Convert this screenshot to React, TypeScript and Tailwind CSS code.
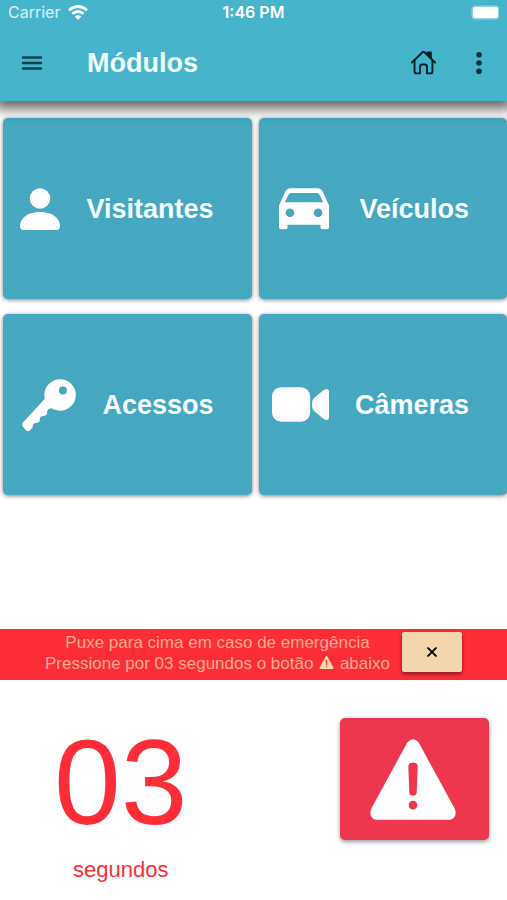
import { JSX, useState } from "react";

interface Module {
  label: string;
  href: string;
  icon: JSX.Element;
}

const modules: Module[] = [
  {
    label: "Visitantes",
    href: "#visitantes",
    icon: (
      <svg width="40" height="42" viewBox="0 0 40 42" fill="currentColor">
        <circle cx="20" cy="10.5" r="10.3" />
        <path d="M0 38C0 30 8 24 20 24S40 30 40 38q0 4-3 4H3q-3 0-3-4z" />
      </svg>
    ),
  },
  {
    label: "Veículos",
    href: "#veiculos",
    icon: (
      <svg width="54" height="42" viewBox="0 0 163 125" fill="currentColor">
        <path
          fillRule="evenodd"
          d="M0 52L18 12Q23 0 36 0H115Q128 0 133 12L151 52V116q0 8-8 8h-10q-8 0-8-8V110H26v6q0 8-8 8H8q-8 0-8-8zM36 14Q31 14 29 19L18 42H133L122 19Q120 14 115 14zM33 61a13 13 0 1 0 0 26a13 13 0 1 0 0-26zM118 61a13 13 0 1 0 0 26a13 13 0 1 0 0-26z"
        />
      </svg>
    ),
  },
  {
    label: "Acessos",
    href: "#acessos",
    icon: (
      <svg width="54" height="54" viewBox="0 0 161 161" fill="currentColor">
        <path
          fillRule="evenodd"
          d="M68 62A47 47 0 1 1 88 90Q74 92 75 103Q76 112 64 113Q53 113 53 123Q54 133 42 134Q30 135 32 147L24 156Q18 161 12 156L4 147Q-2 140 3 133zM122 25a12 12 0 1 0 0 24a12 12 0 1 0 0-24z"
        />
      </svg>
    ),
  },
  {
    label: "Câmeras",
    href: "#cameras",
    icon: (
      <svg width="57" height="35" viewBox="0 0 172 104" fill="currentColor">
        <rect width="115" height="104" rx="27" />
        <path d="M121 46Q121 38 128 32L154 10Q160 5 166 5Q172 6 172 13V91Q172 98 166 99Q160 99 154 94L128 72Q121 66 121 58z" />
      </svg>
    ),
  },
];

const WarningIcon = ({ className }: { className: string }) => (
  <svg className={className} viewBox="0 0 258 242" fill="currentColor">
    <path
      fillRule="evenodd"
      d="M112 10Q129-9 146 10L254 208Q264 231 242 242H17Q-6 234 4 208zM129 70Q114 70 115 84L118 160Q119 170 129 170Q139 170 140 160L143 84Q144 70 129 70zM129 185a13 13 0 1 0 0 26a13 13 0 1 0 0-26z"
    />
  </svg>
);

const StatusBar = () => (
  <div className="grid h-6 grid-cols-3 items-center px-2 font-[Inter,sans-serif] text-base leading-6 text-white">
    <div className="flex items-center gap-2 text-white/80">
      <span>Carrier</span>
      <svg width="20" height="15" viewBox="0 0 60 44" fill="none" stroke="#fff" strokeWidth="8">
        <path d="M3 15Q30-7 57 15M13 26Q30 12 47 26" />
        <path d="M20 34Q30 26 40 34L30 44z" fill="#fff" stroke="none" />
      </svg>
    </div>
    <span className="text-center font-semibold">1:46 PM</span>
    <svg className="justify-self-end" width="28" height="15" viewBox="0 0 32 15" preserveAspectRatio="xMinYMid slice">
      <rect x="0.5" y="0.5" width="28" height="14" rx="4" fill="#fff" fillOpacity="0.4" />
      <rect x="2" y="2" width="25" height="11" rx="2.5" fill="#fff" />
    </svg>
  </div>
);

const Header = () => (
  <header className="relative z-10 bg-[#46b5cb] shadow-[0_3px_12px_5px_rgba(0,0,0,0.6)]">
    <StatusBar />
    <div className="flex h-[77px] items-center pr-[21px] pl-[21px]">
      <button aria-label="Menu" className="text-[#14424e]">
        <svg width="22" height="16" viewBox="0 0 22 16" stroke="currentColor" strokeWidth="2.5" strokeLinecap="round">
          <path d="M2 2.5H20M2 8H20M2 13.500H20" />
        </svg>
      </button>
      <h1 className="ml-11 flex-1 text-[27px] leading-8 font-bold text-[#f2fdff]">Módulos</h1>
      <a href="#inicio" aria-label="Início" className="text-[#0b2228]">
        <svg
          width="25"
          height="25"
          viewBox="0 0 78 76"
          fill="none"
          stroke="currentColor"
          strokeWidth="6"
          strokeLinecap="round"
          strokeLinejoin="round"
        >
          <path d="M3 38L36 6Q39 3 42 6L75 38" />
          <path d="M11 32V66Q11 72 17 72H28V52Q28 44 34 44H44Q50 44 50 52V72H61Q67 72 67 66V32" />
          <path d="M51 12V7H62V24" fill="currentColor" />
        </svg>
      </a>
      <button aria-label="Mais opções" className="ml-9 text-[#0f3038]">
        <svg width="14" height="24" viewBox="0 0 14 24" fill="currentColor">
          <circle cx="7" cy="3.7" r="2.8" />
          <circle cx="7" cy="12" r="2.8" />
          <circle cx="7" cy="20.3" r="2.8" />
        </svg>
      </button>
    </div>
  </header>
);

export default function App() {
  const [showNotice, setShowNotice] = useState(true);

  return (
    <div className="flex min-h-screen flex-col overflow-x-hidden bg-white font-['Liberation_Sans',Arial,sans-serif]">
      <Header />

      <main className="flex-1 pt-[17px] pl-[3px]">
        <nav className="grid grid-cols-2 gap-x-[7px] gap-y-[15px]">
          {modules.map((item) => (
            <a
              key={item.label}
              href={item.href}
              className="flex h-[181px] items-center justify-end gap-[26px] rounded-[5px] bg-[#46a7c0] pr-[38px] text-white shadow-[0_1px_4px_rgba(0,0,0,0.5)]"
            >
              {item.icon}
              <span className="text-[27px] leading-8 font-bold text-[#f4fdff]">{item.label}</span>
            </a>
          ))}
        </nav>
      </main>

      <footer>
        {showNotice && (
          <div className="flex h-[51px] items-start justify-center gap-3 bg-[#ff2d38] pt-[3px]">
            <p className="text-center text-[17px] leading-[21px] text-[#ffab93]">
              Puxe para cima em caso de emergência
              <br />
              Pressione por 03 segundos o botão{" "}
              <WarningIcon className="mx-px inline h-[13px] w-[15px] align-baseline text-[#ffd9b0]" /> abaixo
            </p>
            <button
              aria-label="Fechar"
              onClick={() => setShowNotice(false)}
              className="flex h-10 w-[60px] items-center justify-center rounded-xs bg-[#f4d6ac] text-black shadow-[0_2px_4px_rgba(0,0,0,0.5)]"
            >
              <svg width="10" height="10" viewBox="0 0 10 10" stroke="currentColor" strokeWidth="1.8">
                <path d="M0.5 0.5L9.5 9.5M9.5 0.5L0.5 9.5" />
              </svg>
            </button>
          </div>
        )}
        <div className="flex h-[220px] items-start justify-between pt-[38px] pr-[18px] pl-[54px] text-[#ff2d38]">
          <div className="flex flex-col items-center">
            <span className="text-[120px] leading-[128px]">03</span>
            <span className="mt-3 text-[22px] leading-6">segundos</span>
          </div>
          <button
            aria-label="Emergência"
            className="flex h-[122px] w-[149px] items-center justify-center rounded-[5px] bg-[#ee364f] pr-1 text-white shadow-[0_2px_4px_rgba(0,0,0,0.4)]"
          >
            <WarningIcon className="h-[81px] w-[86px]" />
          </button>
        </div>
      </footer>
    </div>
  );
}
